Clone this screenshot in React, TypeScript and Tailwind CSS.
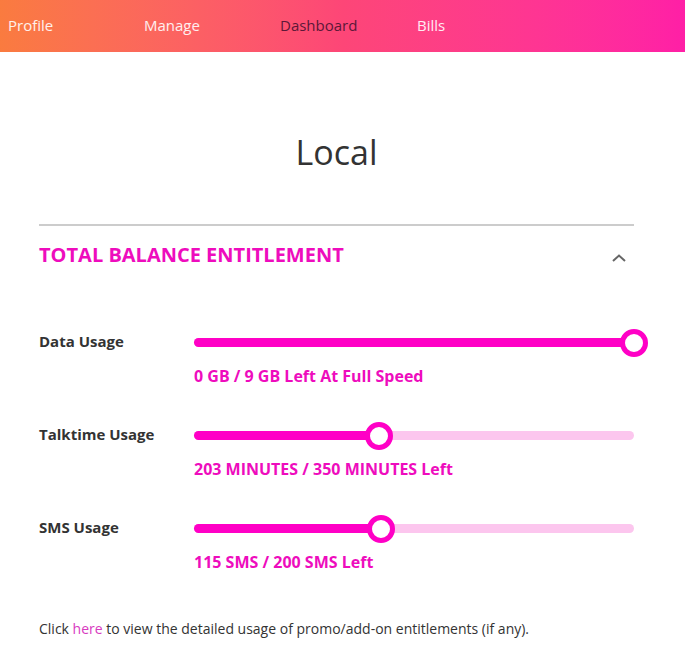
import React from "react";

const rows = [
  { label: "Data Usage", value: "0 GB / 9 GB Left At Full Speed", pct: 100 },
  { label: "Talktime Usage", value: "203 MINUTES / 350 MINUTES Left", pct: 42 },
  { label: "SMS Usage", value: "115 SMS / 200 SMS Left", pct: 42.5 },
];

function Slider({ pct }: { pct: number }) {
  return (
    <div className="relative h-[9px] w-full rounded-full bg-[#fcc6ee]">
      <div
        className="absolute left-0 top-0 h-full rounded-full bg-[#ff00c6]"
        style={{ width: `${pct}%` }}
      />
      <div
        className="absolute top-1/2 h-[28px] w-[28px] -translate-x-1/2 -translate-y-1/2 rounded-full border-[5px] border-[#ff00c6] bg-white"
        style={{ left: `${pct}%` }}
      />
    </div>
  );
}

export default function App() {
  return (
    <div
      className="min-h-[654px] w-[685px] bg-white text-[#333]"
      style={{ fontFamily: '"Open Sans", "Noto Sans", sans-serif' }}
    >
      <nav className="flex h-[52px] items-center bg-gradient-to-r from-[#fa7b3f] via-[#fd4677] to-[#ff1fa6] pb-[2px] text-[15px]">
        <div className="w-[136px] pl-2 text-white/90">Profile</div>
        <div className="w-[136px] pl-2 text-white/90">Manage</div>
        <div className="w-[137px] pl-2 text-[#5c1838]">Dashboard</div>
        <div className="w-[136px] pl-2 text-white/90">Bills</div>
      </nav>

      <div className="ml-[39px] w-[595px]">
        <h1 className="pt-[72px] text-center text-[34px] font-normal leading-[56px] text-[#333]">Local</h1>
        <div className="mt-[44px] h-[2px] bg-[#cccccc]" />
        <div className="flex items-center justify-between pt-[16px]">
          <h2 className="text-[20px] font-bold leading-[26px] text-[#ee0cbd]">TOTAL BALANCE ENTITLEMENT</h2>
          <svg width="18" height="12" viewBox="0 0 18 12" className="mr-[6px] mt-[6px]">
            <path d="M3 9 L9 3.5 L15 9" fill="none" stroke="#666" strokeWidth="2" />
          </svg>
        </div>

        <div className="mt-[62px] flex flex-col gap-[36px]">
          {rows.map((r) => (
            <div key={r.label} className="flex">
              <div className="w-[155px] text-[15px] font-bold leading-[22px] text-[#333]">{r.label}</div>
              <div className="flex-1 pt-[8px]">
                <Slider pct={r.pct} />
                <div className="mt-[18px] text-[16px] font-bold leading-[22px] text-[#ee0cbd]">{r.value}</div>
              </div>
            </div>
          ))}
        </div>

        <p className="mt-[46px] text-[14px] leading-[20px] text-[#333]">
          Click <span className="text-[#d83bbf]">here</span> to view the detailed usage of promo/add-on entitlements (if any).
        </p>
      </div>
    </div>
  );
}
